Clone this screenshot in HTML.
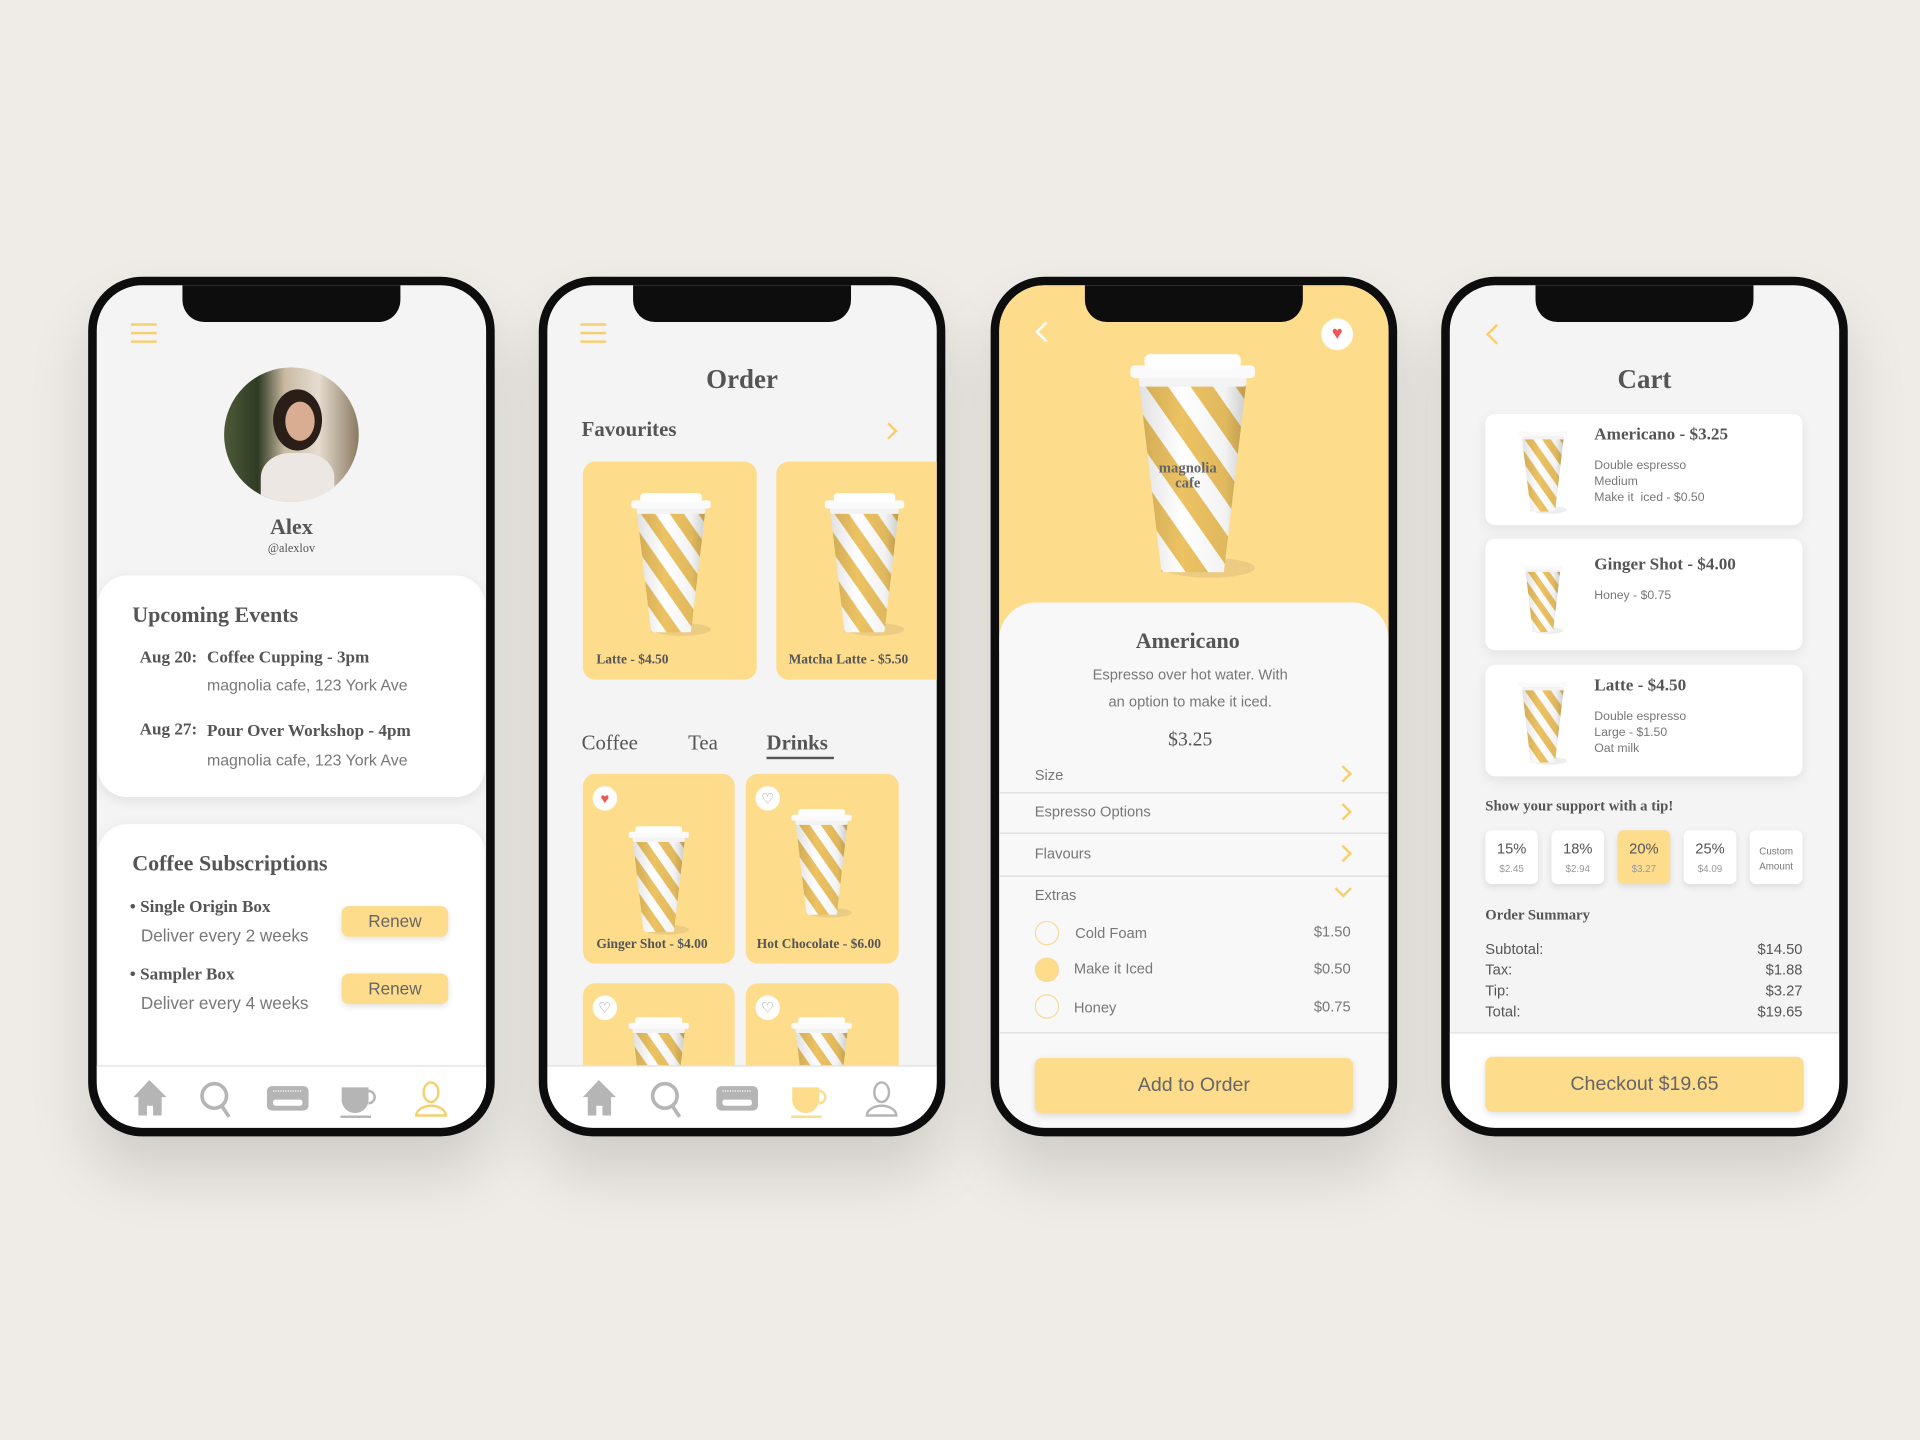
<!DOCTYPE html>
<html><head><meta charset="utf-8">
<style>
*{margin:0;padding:0;box-sizing:border-box}
html,body{width:1920px;height:1440px;overflow:hidden;background:#efece7}
#w{position:absolute;left:0;top:0;width:1568px;height:1176px;transform:scale(1.22449);transform-origin:0 0;background:#efece7;font-family:"Liberation Sans",sans-serif}
.ph{position:absolute;top:226px;width:332px;height:702px;border:7px solid #0d0d0d;border-radius:44px;background:#f4f4f4;overflow:hidden;box-shadow:0 30px 50px rgba(0,0,0,.13)}
.notch{position:absolute;top:-2px;left:70px;width:178px;height:32px;background:#0d0d0d;border-radius:0 0 18px 18px;z-index:10}
.a{position:absolute;white-space:nowrap}
.sf{font-family:"Liberation Serif",serif;color:#555;font-weight:bold}
.ss{font-family:"Liberation Sans",sans-serif;color:#777}
.ham{position:absolute;width:21px;height:16px;border-top:2px solid #f6cf6e;border-bottom:2px solid #f6cf6e}
.ham:after{content:"";position:absolute;left:0;right:0;top:5px;border-top:2px solid #f6cf6e}
.card{position:absolute;background:#fff;box-shadow:0 3px 10px rgba(0,0,0,.08)}
.btn{position:absolute;background:#fddc8c;border-radius:6px;color:#666;text-align:center;box-shadow:0 2px 5px rgba(0,0,0,.12)}
.nav{position:absolute;left:0;right:0;top:637px;height:70px;background:#fff;border-top:1px solid #ddd}
.y{position:absolute;background:#fddc8c;border-radius:10px;overflow:hidden}
.hc{position:absolute;width:20px;height:20px;border-radius:50%;background:#fff;text-align:center;font-size:12px;line-height:20px}
.line{position:absolute;left:0;right:0;border-top:1px solid #ddd}
.chev{position:absolute;width:10px;height:10px;border-right:2px solid #f6cf6e;border-top:2px solid #f6cf6e;transform:rotate(45deg)}
.rad{position:absolute;width:20px;height:20px;border-radius:50%;border:1px solid #f6dc9a}
.tip{position:absolute;top:445px;width:43px;height:44px;background:#fff;border-radius:5px;box-shadow:0 2px 5px rgba(0,0,0,.1);text-align:center;font-size:12px;color:#555;padding-top:8px}
.tip small{display:block;font-size:8px;color:#999;margin-top:5px}
</style></head><body><div id="w">
<svg width="0" height="0" style="position:absolute">
<defs>
<pattern id="st" width="26" height="26" patternUnits="userSpaceOnUse" patternTransform="rotate(-35)"><rect width="26" height="26" fill="#fff"/><rect width="13" height="26" fill="#ecc262"/></pattern>
<linearGradient id="sh" x1="0" x2="1"><stop offset="0" stop-color="#000" stop-opacity=".12"/><stop offset=".4" stop-color="#000" stop-opacity="0"/><stop offset=".8" stop-color="#000" stop-opacity=".05"/><stop offset="1" stop-color="#000" stop-opacity=".2"/></linearGradient>
<symbol id="cup" viewBox="0 0 100 160">
<ellipse cx="62" cy="152" rx="32" ry="7" fill="#000" opacity=".07"/>
<polygon points="12,20 88,20 72,155 28,155" fill="url(#st)"/>
<polygon points="12,20 88,20 72,155 28,155" fill="url(#sh)"/>
<rect x="12" y="16" width="76" height="8" rx="2" fill="#f3f3f3"/>
<rect x="6" y="9" width="88" height="9" rx="3" fill="#fafafa"/>
<rect x="16" y="1" width="68" height="10" rx="4" fill="#fff"/>
</symbol>
</defs></svg>

<!-- PHONE 1 -->
<div class="ph" style="left:72px"><div class="notch"></div>
<div class="ham" style="left:28px;top:31px"></div>
<div class="a" style="left:104px;top:67px;width:110px;height:110px;border-radius:50%;overflow:hidden;background:linear-gradient(90deg,#4d5a38 0%,#2f3b24 25%,#c9b9a2 45%,#e6ddd0 70%,#8b7a63 100%)">
<div class="a" style="left:40px;top:18px;width:40px;height:50px;border-radius:50%;background:#2a1e18"></div>
<div class="a" style="left:50px;top:28px;width:24px;height:32px;border-radius:50%;background:#d9ad92"></div>
<div class="a" style="left:30px;top:70px;width:60px;height:50px;border-radius:40% 40% 0 0;background:#ece7e2"></div>
</div>
<div class="a sf" style="left:0;width:318px;text-align:center;top:187px;font-size:18px">Alex</div>
<div class="a sf" style="left:0;width:318px;text-align:center;top:210px;font-size:10px;font-weight:normal">@alexlov</div>
<div class="card" style="left:1px;top:237px;width:316px;height:181px;border-radius:24px"></div>
<div class="a sf" style="left:29px;top:259px;font-size:18px">Upcoming Events</div>
<div class="a sf" style="left:35px;top:297px;font-size:14px">Aug 20:</div>
<div class="a sf" style="left:90px;top:297px;font-size:14px">Coffee Cupping - 3pm</div>
<div class="a ss" style="left:90px;top:319px;font-size:13px">magnolia cafe, 123 York Ave</div>
<div class="a sf" style="left:35px;top:356px;font-size:14px">Aug 27:</div>
<div class="a sf" style="left:90px;top:357px;font-size:14px">Pour Over Workshop - 4pm</div>
<div class="a ss" style="left:90px;top:380px;font-size:13px">magnolia cafe, 123 York Ave</div>
<div class="card" style="left:1px;top:440px;width:316px;height:230px;border-radius:24px"></div>
<div class="a sf" style="left:29px;top:462px;font-size:18px">Coffee Subscriptions</div>
<div class="a sf" style="left:27px;top:501px;font-size:14px">• Single Origin Box</div>
<div class="a ss" style="left:36px;top:523px;font-size:14px">Deliver every 2 weeks</div>
<div class="btn" style="left:200px;top:507px;width:87px;height:25px;line-height:25px;font-size:14px">Renew</div>
<div class="a sf" style="left:27px;top:556px;font-size:14px">• Sampler Box</div>
<div class="a ss" style="left:36px;top:578px;font-size:14px">Deliver every 4 weeks</div>
<div class="btn" style="left:200px;top:562px;width:87px;height:25px;line-height:25px;font-size:14px">Renew</div>
<div class="nav">
<svg width="318" height="60" style="position:absolute;left:0;top:0">
<path d="M43 11 L30 25 H34 V40 H41 V32 H46 V40 H53 V25 H57Z" fill="#b5b5b5"/>
<circle cx="96" cy="24" r="10" fill="none" stroke="#b5b5b5" stroke-width="3"/><line x1="102" y1="32" x2="108" y2="41" stroke="#b5b5b5" stroke-width="3"/>
<rect x="139" y="16" width="34" height="20" rx="4" fill="#b5b5b5"/><rect x="144" y="27" width="24" height="5" rx="2" fill="#fff"/><path d="M144 20h24" stroke="#fff" stroke-dasharray="1 1"/>
<path d="M200 17h22v10a11 11 0 0 1-22 0z" fill="#b5b5b5"/><path d="M222 20a5 5 0 0 1 0 10" fill="none" stroke="#b5b5b5" stroke-width="2"/><rect x="199" y="40" width="25" height="2" fill="#b5b5b5"/>
<ellipse cx="273" cy="21" rx="6" ry="8" fill="none" stroke="#f6cf6e" stroke-width="2"/><path d="M261 40a12 8 0 0 1 24 0z" fill="none" stroke="#f6cf6e" stroke-width="2"/>
</svg></div>
</div>

<!-- PHONE 2 -->
<div class="ph" style="left:440px"><div class="notch"></div>
<div class="ham" style="left:27px;top:31px"></div>
<div class="a sf" style="left:0;width:318px;text-align:center;top:64px;font-size:22px">Order</div>
<div class="a sf" style="left:28px;top:108px;font-size:17px">Favourites</div>
<div class="chev" style="left:274px;top:114px"></div>
<div class="y" style="left:29px;top:144px;width:142px;height:178px"><svg width="74" height="118" style="position:absolute;left:35px;top:25px"><use href="#cup"/></svg><div class="a sf" style="left:11px;top:156px;font-size:11px">Latte - $4.50</div></div>
<div class="y" style="left:187px;top:144px;width:142px;height:178px;border-radius:10px 0 0 10px"><svg width="74" height="118" style="position:absolute;left:35px;top:25px"><use href="#cup"/></svg><div class="a sf" style="left:10px;top:156px;font-size:11px">Matcha Latte - $5.50</div></div>
<div class="a sf" style="left:28px;top:364px;font-size:17px;font-weight:normal">Coffee</div>
<div class="a sf" style="left:115px;top:364px;font-size:17px;font-weight:normal">Tea</div>
<div class="a sf" style="left:179px;top:364px;font-size:17px">Drinks</div>
<div class="a" style="left:179px;top:385px;width:55px;border-top:2px solid #555"></div>
<div class="y" style="left:29px;top:399px;width:124px;height:155px"><svg width="56" height="90" style="position:absolute;left:34px;top:42px"><use href="#cup"/></svg><div class="hc" style="left:8px;top:10px;color:#e55">♥</div><div class="a sf" style="left:11px;top:133px;font-size:11px">Ginger Shot - $4.00</div></div>
<div class="y" style="left:162px;top:399px;width:125px;height:155px"><svg width="56" height="90" style="position:absolute;left:34px;top:28px"><use href="#cup"/></svg><div class="hc" style="left:8px;top:10px;color:#999">♡</div><div class="a sf" style="left:9px;top:133px;font-size:11px">Hot Chocolate - $6.00</div></div>
<div class="y" style="left:29px;top:570px;width:124px;height:100px"><svg width="56" height="90" style="position:absolute;left:34px;top:27px"><use href="#cup"/></svg><div class="hc" style="left:8px;top:10px;color:#999">♡</div></div>
<div class="y" style="left:162px;top:570px;width:125px;height:100px"><svg width="56" height="90" style="position:absolute;left:34px;top:27px"><use href="#cup"/></svg><div class="hc" style="left:8px;top:10px;color:#999">♡</div></div>
<div class="nav">
<svg width="318" height="60" style="position:absolute;left:0;top:0">
<path d="M42 11 L29 25 H33 V40 H40 V32 H45 V40 H52 V25 H56Z" fill="#b5b5b5"/>
<circle cx="96" cy="24" r="10" fill="none" stroke="#b5b5b5" stroke-width="3"/><line x1="102" y1="32" x2="108" y2="41" stroke="#b5b5b5" stroke-width="3"/>
<rect x="138" y="16" width="34" height="20" rx="4" fill="#b5b5b5"/><rect x="143" y="27" width="24" height="5" rx="2" fill="#fff"/><path d="M143 20h24" stroke="#fff" stroke-dasharray="1 1"/>
<path d="M200 17h22v10a11 11 0 0 1-22 0z" fill="#fddc8c"/><path d="M222 20a5 5 0 0 1 0 10" fill="none" stroke="#fddc8c" stroke-width="2"/><rect x="199" y="40" width="25" height="2" fill="#fddc8c"/>
<ellipse cx="273" cy="21" rx="6" ry="8" fill="none" stroke="#b5b5b5" stroke-width="2"/><path d="M261 40a12 8 0 0 1 24 0z" fill="none" stroke="#b5b5b5" stroke-width="2"/>
</svg></div>
</div>

<!-- PHONE 3 -->
<div class="ph" style="left:809px"><div class="notch"></div>
<div class="a" style="left:0;top:0;width:318px;height:300px;background:#fddc8c"></div>
<div class="a" style="left:32px;top:32px;width:12px;height:12px;border-left:2px solid #fff;border-bottom:2px solid #fff;transform:rotate(45deg)"></div>
<div class="hc" style="left:263px;top:27px;width:26px;height:26px;line-height:26px;font-size:15px;color:#e55">♥</div>
<svg width="116" height="185" style="position:absolute;left:100px;top:55px"><use href="#cup"/><text x="54" y="98" font-family="Liberation Serif,serif" font-size="12" font-weight="bold" fill="#666" text-anchor="middle">magnolia</text><text x="54" y="110" font-family="Liberation Serif,serif" font-size="12" font-weight="bold" fill="#666" text-anchor="middle">cafe</text></svg>
<div class="a" style="left:0;top:259px;width:318px;height:460px;background:#f8f8f8;border-radius:30px 30px 0 0"></div>
<div class="a sf" style="left:0;width:308px;text-align:center;top:280px;font-size:18px">Americano</div>
<div class="a ss" style="left:0;width:312px;text-align:center;top:311px;font-size:12px">Espresso over hot water. With</div>
<div class="a ss" style="left:0;width:312px;text-align:center;top:333px;font-size:12px">an option to make it iced.</div>
<div class="a sf" style="left:0;width:312px;text-align:center;top:363px;font-size:16px;font-weight:normal">$3.25</div>
<div class="a ss" style="left:29px;top:393px;font-size:12px">Size</div><div class="chev" style="left:276px;top:394px"></div><div class="line" style="top:414px"></div>
<div class="a ss" style="left:29px;top:423px;font-size:12px">Espresso Options</div><div class="chev" style="left:276px;top:425px"></div><div class="line" style="top:447px"></div>
<div class="a ss" style="left:29px;top:457px;font-size:12px">Flavours</div><div class="chev" style="left:276px;top:459px"></div><div class="line" style="top:482px"></div>
<div class="a ss" style="left:29px;top:491px;font-size:12px">Extras</div><div class="chev" style="left:276px;top:488px;transform:rotate(135deg)"></div>
<div class="rad" style="left:29px;top:519px"></div><div class="a ss" style="left:62px;top:522px;font-size:12px">Cold Foam</div><div class="a ss" style="left:257px;top:521px;font-size:12px">$1.50</div>
<div class="rad" style="left:29px;top:549px;background:#fddc8c"></div><div class="a ss" style="left:61px;top:551px;font-size:12px">Make it Iced</div><div class="a ss" style="left:257px;top:551px;font-size:12px">$0.50</div>
<div class="rad" style="left:29px;top:579px"></div><div class="a ss" style="left:61px;top:583px;font-size:12px">Honey</div><div class="a ss" style="left:257px;top:582px;font-size:12px">$0.75</div>
<div class="line" style="top:610px"></div>
<div class="btn" style="left:29px;top:631px;width:260px;height:45px;line-height:45px;font-size:16px">Add to Order</div>
</div>

<!-- PHONE 4 -->
<div class="ph" style="left:1177px"><div class="notch"></div>
<div class="a" style="left:32px;top:34px;width:12px;height:12px;border-left:2px solid #f6cf6e;border-bottom:2px solid #f6cf6e;transform:rotate(45deg)"></div>
<div class="a sf" style="left:0;width:318px;text-align:center;top:64px;font-size:22px">Cart</div>
<div class="card" style="left:29px;top:105px;width:259px;height:91px;border-radius:8px"></div>
<svg width="46" height="72" style="position:absolute;left:53px;top:115px"><use href="#cup"/></svg>
<div class="a sf" style="left:118px;top:115px;font-size:14px">Americano - $3.25</div>
<div class="a ss" style="left:118px;top:141px;font-size:10px;line-height:13px">Double espresso<br>Medium<br>Make it &nbsp;iced - $0.50</div>
<div class="card" style="left:29px;top:207px;width:259px;height:91px;border-radius:8px"></div>
<svg width="44" height="60" style="position:absolute;left:54px;top:225px"><use href="#cup"/></svg>
<div class="a sf" style="left:118px;top:221px;font-size:14px">Ginger Shot - $4.00</div>
<div class="a ss" style="left:118px;top:248px;font-size:10px">Honey - $0.75</div>
<div class="card" style="left:29px;top:310px;width:259px;height:91px;border-radius:8px"></div>
<svg width="46" height="72" style="position:absolute;left:53px;top:320px"><use href="#cup"/></svg>
<div class="a sf" style="left:118px;top:320px;font-size:14px">Latte - $4.50</div>
<div class="a ss" style="left:118px;top:346px;font-size:10px;line-height:13px">Double espresso<br>Large - $1.50<br>Oat milk</div>
<div class="a sf" style="left:29px;top:418px;font-size:12px">Show your support with a tip!</div>
<div class="tip" style="left:29px">15%<small>$2.45</small></div>
<div class="tip" style="left:83px">18%<small>$2.94</small></div>
<div class="tip" style="left:137px;background:#fddc8c">20%<small>$3.27</small></div>
<div class="tip" style="left:191px">25%<small>$4.09</small></div>
<div class="tip" style="left:245px;font-size:8px;padding-top:12px;line-height:12px;color:#777">Custom<br>Amount</div>
<div class="a sf" style="left:29px;top:507px;font-size:12px">Order Summary</div>
<div class="a" style="left:29px;top:534px;width:259px;font-size:12px;color:#555;line-height:17px">
<div style="display:flex;justify-content:space-between"><span>Subtotal:</span><span>$14.50</span></div>
<div style="display:flex;justify-content:space-between"><span>Tax:</span><span>$1.88</span></div>
<div style="display:flex;justify-content:space-between"><span>Tip:</span><span>$3.27</span></div>
<div style="display:flex;justify-content:space-between"><span>Total:</span><span>$19.65</span></div></div>
<div class="a" style="left:0;right:0;top:610px;height:100px;background:#fff;border-top:1px solid #ddd"></div>
<div class="btn" style="left:29px;top:630px;width:260px;height:45px;line-height:45px;font-size:16px">Checkout $19.65</div>
</div>
</div></body></html>
